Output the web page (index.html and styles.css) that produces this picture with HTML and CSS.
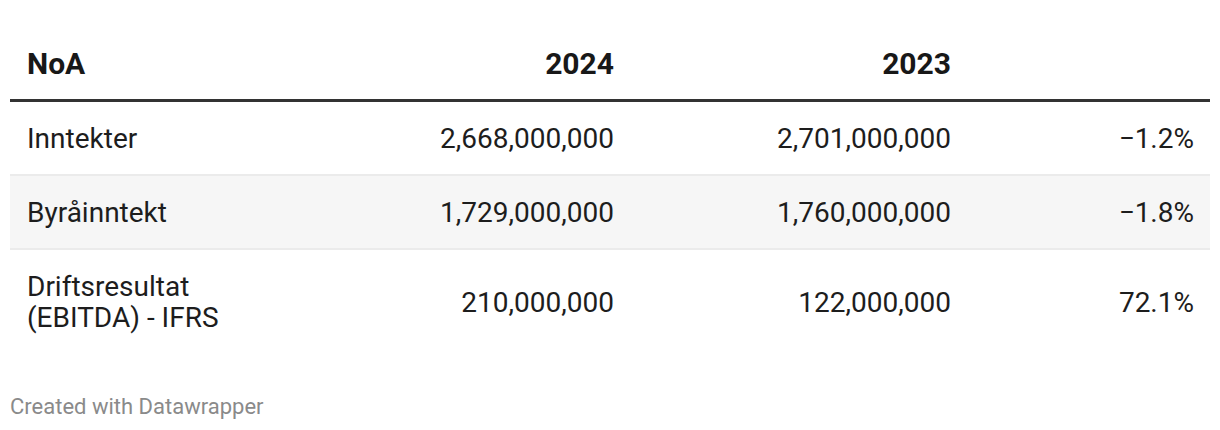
FILE: index.html
```html
<!DOCTYPE html>
<html lang="no">
<head>
<meta charset="utf-8">
<title>NoA</title>
<link rel="stylesheet" href="styles.css">
</head>
<body>
<div class="chart">
  <table class="dw-table">
    <colgroup>
      <col class="c-label">
      <col class="c-num">
      <col class="c-num">
      <col class="c-pct">
    </colgroup>
    <thead>
      <tr>
        <th class="left">NoA</th>
        <th class="right">2024</th>
        <th class="right">2023</th>
        <th class="right"></th>
      </tr>
    </thead>
    <tbody>
      <tr>
        <td class="left">Inntekter</td>
        <td class="right">2,668,000,000</td>
        <td class="right">2,701,000,000</td>
        <td class="right">−1.2%</td>
      </tr>
      <tr class="striped">
        <td class="left">Byråinntekt</td>
        <td class="right">1,729,000,000</td>
        <td class="right">1,760,000,000</td>
        <td class="right">−1.8%</td>
      </tr>
      <tr>
        <td class="left">Driftsresultat<br>(EBITDA) - IFRS</td>
        <td class="right">210,000,000</td>
        <td class="right">122,000,000</td>
        <td class="right">72.1%</td>
      </tr>
    </tbody>
  </table>
  <div class="footer">Created with Datawrapper</div>
</div>
</body>
</html>
```
FILE: styles.css
```css
html, body {
  margin: 0;
  padding: 0;
  background: #ffffff;
}

body {
  font-family: Roboto, "Liberation Sans", Arial, sans-serif;
  color: #1d1d1d;
}

.chart {
  padding: 10px 10px 0 10px;
}

.dw-table {
  width: 1200px;
  table-layout: fixed;
  border-collapse: collapse;
  border-spacing: 0;
}

.c-label { width: 282px; }
.c-num { width: 337px; }
.c-pct { width: 244px; }

.dw-table th {
  font-size: 30px;
  font-weight: 700;
  line-height: 36px;
  padding: 36px 15px 17px 17px;
  border-bottom: 3px solid #333333;
  color: #181818;
}

.dw-table td {
  font-size: 28px;
  font-weight: 400;
  line-height: 31px;
  padding: 21px 15px 20px 17px;
  border-bottom: 2px solid #ebebeb;
  vertical-align: middle;
}

.dw-table td:last-child {
  padding-right: 16px;
}

.dw-table tbody tr:last-child td {
  border-bottom: none;
}

.striped td {
  background: #f6f6f6;
}

.left { text-align: left; }
.right { text-align: right; }

.footer {
  margin-top: 41px;
  font-size: 22px;
  line-height: 26px;
  color: #8a8a8a;
}
```
